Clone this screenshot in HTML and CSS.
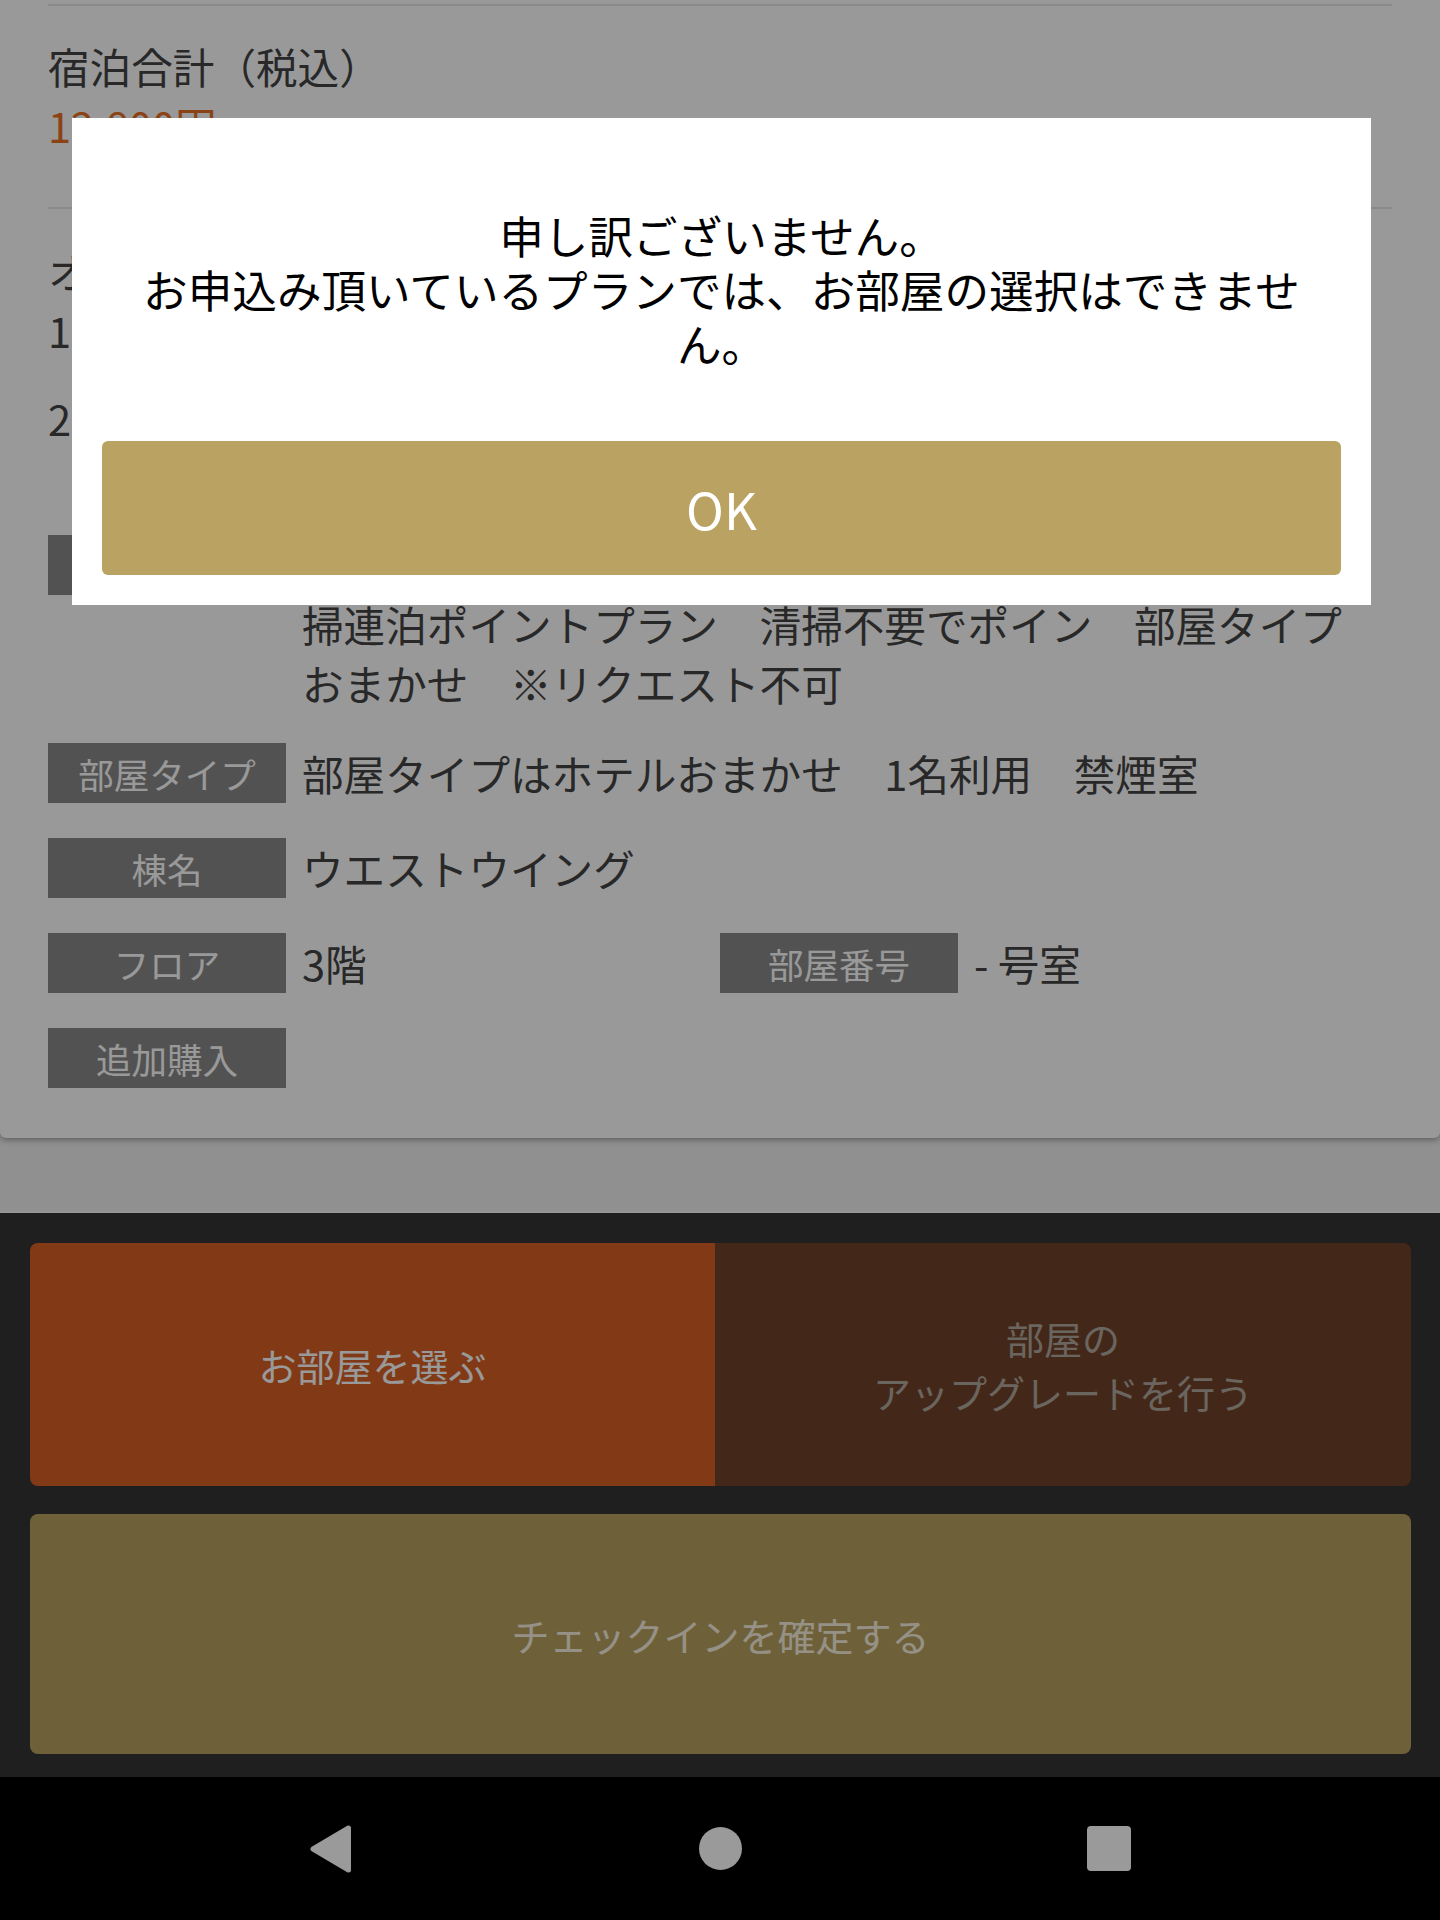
FILE: index.html
```html
<!DOCTYPE html>
<html lang="ja">
<head>
<meta charset="utf-8">
<title>チェックイン</title>
<link rel="stylesheet" href="styles.css">
</head>
<body>
<div class="screen">
  <main class="page">
    <section class="card">
      <div class="block block-total">
        <p class="line">宿泊合計（税込）</p>
        <p class="line price">12,800円</p>
      </div>
      <div class="block block-option">
        <p class="line">オプション購入</p>
        <p class="line">1泊目　朝食なし</p>
        <p class="line line-gap">2泊目　朝食なし</p>
      </div>
      <div class="details">
        <div class="row row-multi">
          <span class="label">プラン名</span>
          <span class="value value-wide">【清掃不要】おトクにポイントがたまるプラン　エコ清掃連泊ポイントプラン　清掃不要でポイン　部屋タイプおまかせ　※リクエスト不可</span>
        </div>
        <div class="row">
          <span class="label">部屋タイプ</span>
          <span class="value">部屋タイプはホテルおまかせ　1名利用　禁煙室</span>
        </div>
        <div class="row">
          <span class="label">棟名</span>
          <span class="value">ウエストウイング</span>
        </div>
        <div class="row row-split">
          <div class="half">
            <span class="label">フロア</span>
            <span class="value">3階</span>
          </div>
          <div class="half">
            <span class="label">部屋番号</span>
            <span class="value">- 号室</span>
          </div>
        </div>
        <div class="row">
          <span class="label">追加購入</span>
          <span class="value"></span>
        </div>
      </div>
    </section>
    <div class="spacer"></div>
    <footer class="actions">
      <div class="choice">
        <button class="choice-btn choice-select">お部屋を選ぶ</button>
        <button class="choice-btn choice-upgrade">部屋の<br>アップグレードを行う</button>
      </div>
      <button class="confirm-btn">チェックインを確定する</button>
    </footer>
  </main>
  <div class="overlay"></div>
  <div class="dialog" role="dialog">
    <p class="dialog-message">申し訳ございません。<br>お申込み頂いているプランでは、お部屋の選択はできません。</p>
    <button class="dialog-ok">OK</button>
  </div>
</div>
<nav class="navbar">
  <div class="nav-inner">
    <div class="nav-slot">
      <svg class="nav-icon" width="42" height="48" viewBox="0 0 42 48"><polygon points="38.5,3 38.5,45 3,24" fill="#9a9a9a" stroke="#9a9a9a" stroke-width="5" stroke-linejoin="round"/></svg>
    </div>
    <div class="nav-slot">
      <svg class="nav-icon" width="43" height="43" viewBox="0 0 43 43"><circle cx="21.5" cy="21.5" r="21.5" fill="#9a9a9a"/></svg>
    </div>
    <div class="nav-slot">
      <svg class="nav-icon" width="44" height="45" viewBox="0 0 44 45"><rect x="0" y="0" width="44" height="45" rx="4" fill="#9a9a9a"/></svg>
    </div>
  </div>
</nav>
</body>
</html>
```

FILE: styles.css
```css
* {
  box-sizing: border-box;
}

html, body {
  margin: 0;
  padding: 0;
}

body {
  width: 1440px;
  height: 1920px;
  overflow: hidden;
  font-family: "Noto Sans CJK JP", "Noto Sans", sans-serif;
  background: #000;
}

p {
  margin: 0;
}

button {
  font-family: inherit;
  border: none;
  padding: 0;
  cursor: pointer;
}

.screen {
  position: relative;
  height: 1777px;
  overflow: hidden;
}

.page {
  display: flex;
  flex-direction: column;
  height: 100%;
  background: #f0f0f0;
}

/* ---------- card ---------- */
.card {
  background: #fff;
  padding: 4px 48px 50px 48px;
  border-radius: 0 0 6px 6px;
  box-shadow: 0 2px 6px rgba(0, 0, 0, 0.35);
  color: #444;
  font-size: 41.6px;
}

.line {
  line-height: 59px;
  white-space: nowrap;
}

.price {
  color: #e86e23;
}

.block-total {
  border-top: 2px solid #e6e6e6;
  border-bottom: 2px solid #e6e6e6;
  padding: 31px 0 52px;
}

.block-option {
  padding: 33px 0 87px;
}

.line-gap {
  margin-top: 29px;
}

.details {
  display: flex;
  flex-direction: column;
  gap: 35px;
}

.row {
  display: flex;
  align-items: flex-start;
  gap: 16px;
}

.row-multi {
  margin-bottom: -5px;
}

.label {
  flex: 0 0 238px;
  height: 60px;
  display: flex;
  align-items: center;
  justify-content: center;
  background: #898989;
  color: #fff;
  font-size: 35.5px;
  white-space: nowrap;
}

.value {
  padding-top: 1px;
  line-height: 59px;
  min-height: 60px;
}

.value-wide {
  max-width: 1060px;
}

.row-split {
  gap: 0;
}

.half {
  flex: 0 0 672px;
  display: flex;
  align-items: flex-start;
  gap: 16px;
}

/* ---------- bottom actions ---------- */
.spacer {
  flex: 1;
}

.actions {
  background: #343434;
  border-top: 2px solid #fafafa;
  padding: 30px 29px 23px 30px;
}

.choice {
  display: flex;
  height: 243px;
  border-radius: 8px;
  overflow: hidden;
}

.choice-btn {
  display: flex;
  align-items: center;
  justify-content: center;
  text-align: center;
  font-size: 38px;
  line-height: 54px;
}

.choice-select {
  flex: 0 0 685px;
  background: #d96126;
  color: #fff;
}

.choice-upgrade {
  flex: 1;
  background: #70442b;
  color: #b3a89f;
}

.confirm-btn {
  display: flex;
  align-items: center;
  justify-content: center;
  width: 100%;
  height: 240px;
  margin-top: 28px;
  border-radius: 8px;
  background: #b7a25f;
  color: #fbf2e0;
  font-size: 38px;
}

/* ---------- modal ---------- */
.overlay {
  position: absolute;
  inset: 0;
  background: rgba(0, 0, 0, 0.4);
}

.dialog {
  position: absolute;
  top: 118px;
  left: 72px;
  width: 1299px;
  background: #fff;
  padding: 90px 30px 30px;
}

.dialog-message {
  padding: 0 30px;
  text-align: center;
  color: #000;
  font-size: 44.6px;
  line-height: 54px;
}

.dialog-ok {
  display: flex;
  align-items: center;
  justify-content: center;
  width: 100%;
  height: 134px;
  margin-top: 71px;
  border-radius: 6px;
  background: #b9a262;
  color: #fff;
  font-size: 51px;
}

/* ---------- system nav bar ---------- */
.navbar {
  height: 143px;
  background: #000;
}

.nav-inner {
  display: flex;
  width: 1167px;
  height: 100%;
  margin: 0 auto;
}

.nav-slot {
  flex: 1;
  display: flex;
  align-items: center;
  justify-content: center;
}

.nav-icon {
  display: block;
}
```
